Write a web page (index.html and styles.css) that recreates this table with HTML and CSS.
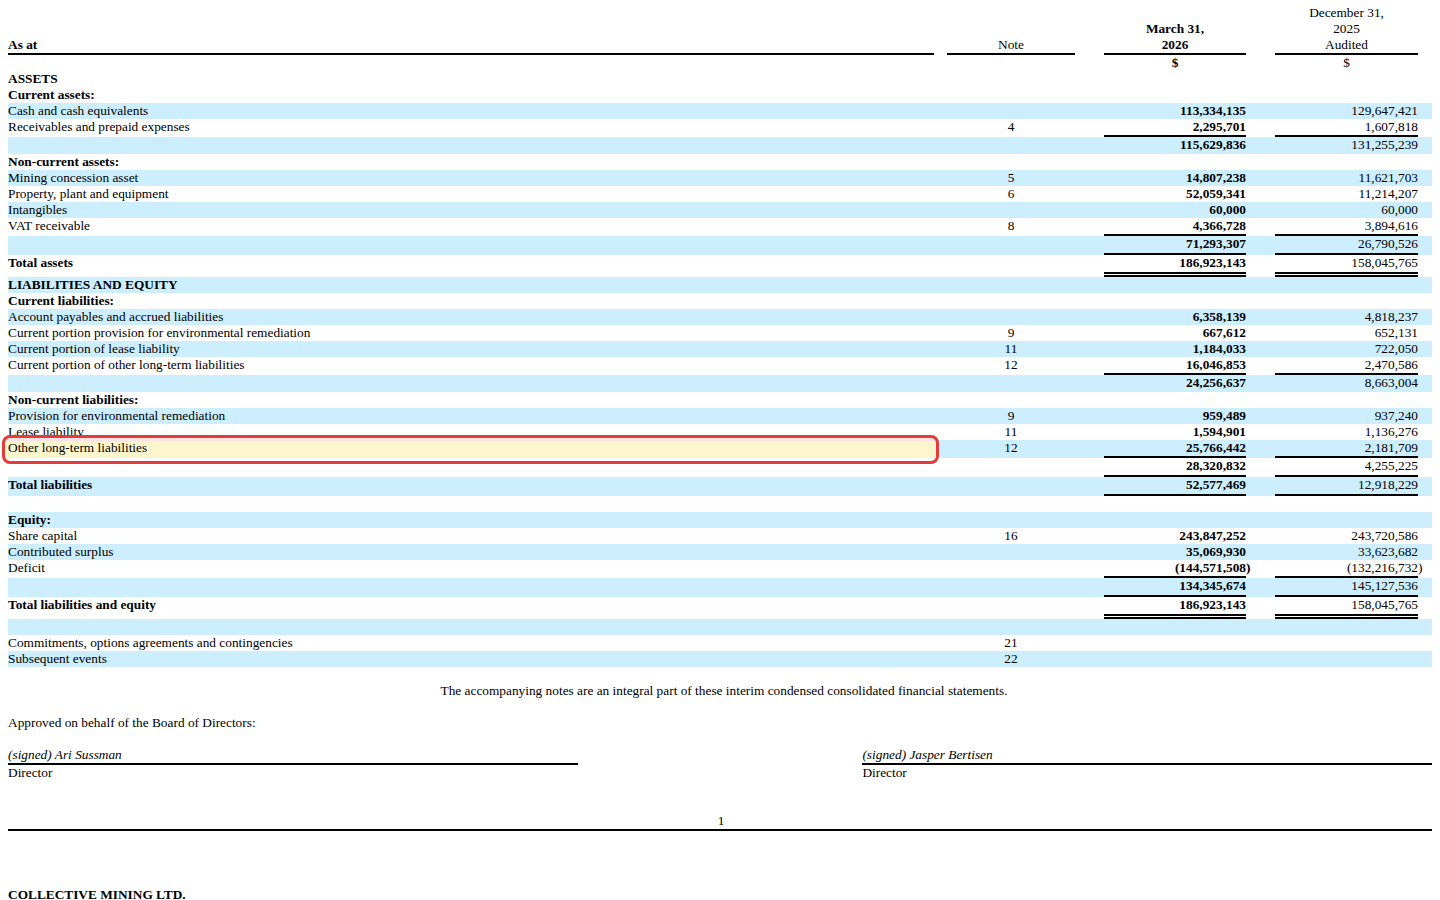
FILE: index.html
```html
<!DOCTYPE html>
<html lang="en">
<head>
<meta charset="utf-8">
<title>Collective Mining Ltd. - Statement of Financial Position</title>
<link rel="stylesheet" href="styles.css">
</head>
<body>
<div class="page">
<table class="bs">
<colgroup>
<col class="c-label"><col class="c-sp1"><col class="c-note"><col class="c-sp"><col class="c-cur"><col class="c-sp"><col class="c-pri"><col class="c-end">
</colgroup>
<tbody>
<tr class="hdr">
<td class="ln bd">As at</td><td></td><td class="ln note">Note</td><td></td><td class="ln ctr bd">March 31,<br>2026</td><td></td><td class="ln ctr">December 31,<br>2025<br>Audited</td><td></td>
</tr>
<tr><td></td><td></td><td></td><td></td><td class="ctr bd">$</td><td></td><td class="ctr">$</td><td></td></tr>
<tr><td class="bd">ASSETS</td><td></td><td></td><td></td><td></td><td></td><td></td><td></td></tr>
<tr><td class="bd">Current assets:</td><td></td><td></td><td></td><td></td><td></td><td></td><td></td></tr>
<tr class="b"><td>Cash and cash equivalents</td><td></td><td class="note"></td><td></td><td class="num bd">113,334,135</td><td></td><td class="num">129,647,421</td><td></td></tr>
<tr><td>Receivables and prepaid expenses</td><td></td><td class="note">4</td><td></td><td class="num bd ul">2,295,701</td><td></td><td class="num ul">1,607,818</td><td></td></tr>
<tr class="b sub"><td></td><td></td><td class="note"></td><td></td><td class="num bd">115,629,836</td><td></td><td class="num">131,255,239</td><td></td></tr>
<tr><td class="bd">Non-current assets:</td><td></td><td></td><td></td><td></td><td></td><td></td><td></td></tr>
<tr class="b"><td>Mining concession asset</td><td></td><td class="note">5</td><td></td><td class="num bd">14,807,238</td><td></td><td class="num">11,621,703</td><td></td></tr>
<tr><td>Property, plant and equipment</td><td></td><td class="note">6</td><td></td><td class="num bd">52,059,341</td><td></td><td class="num">11,214,207</td><td></td></tr>
<tr class="b"><td>Intangibles</td><td></td><td class="note"></td><td></td><td class="num bd">60,000</td><td></td><td class="num">60,000</td><td></td></tr>
<tr><td>VAT receivable</td><td></td><td class="note">8</td><td></td><td class="num bd ul">4,366,728</td><td></td><td class="num ul">3,894,616</td><td></td></tr>
<tr class="b sub"><td></td><td></td><td class="note"></td><td></td><td class="num bd ul">71,293,307</td><td></td><td class="num ul">26,790,526</td><td></td></tr>
<tr><td class="bd">Total assets</td><td></td><td class="note"></td><td></td><td class="num bd dbl">186,923,143</td><td></td><td class="num dbl">158,045,765</td><td></td></tr>
<tr class="b"><td class="bd">LIABILITIES AND EQUITY</td><td></td><td></td><td></td><td></td><td></td><td></td><td></td></tr>
<tr><td class="bd">Current liabilities:</td><td></td><td></td><td></td><td></td><td></td><td></td><td></td></tr>
<tr class="b"><td>Account payables and accrued liabilities</td><td></td><td class="note"></td><td></td><td class="num bd">6,358,139</td><td></td><td class="num">4,818,237</td><td></td></tr>
<tr><td>Current portion provision for environmental remediation</td><td></td><td class="note">9</td><td></td><td class="num bd">667,612</td><td></td><td class="num">652,131</td><td></td></tr>
<tr class="b"><td>Current portion of lease liability</td><td></td><td class="note">11</td><td></td><td class="num bd">1,184,033</td><td></td><td class="num">722,050</td><td></td></tr>
<tr><td>Current portion of other long-term liabilities</td><td></td><td class="note">12</td><td></td><td class="num bd ul">16,046,853</td><td></td><td class="num ul">2,470,586</td><td></td></tr>
<tr class="b sub"><td></td><td></td><td class="note"></td><td></td><td class="num bd">24,256,637</td><td></td><td class="num">8,663,004</td><td></td></tr>
<tr><td class="bd">Non-current liabilities:</td><td></td><td></td><td></td><td></td><td></td><td></td><td></td></tr>
<tr class="b"><td>Provision for environmental remediation</td><td></td><td class="note">9</td><td></td><td class="num bd">959,489</td><td></td><td class="num">937,240</td><td></td></tr>
<tr><td>Lease liability</td><td></td><td class="note">11</td><td></td><td class="num bd">1,594,901</td><td></td><td class="num">1,136,276</td><td></td></tr>
<tr class="b"><td class="hl"><span class="hl-box"></span><span class="hl-text">Other long-term liabilities</span></td><td></td><td class="note">12</td><td></td><td class="num bd ul">25,766,442</td><td></td><td class="num ul">2,181,709</td><td></td></tr>
<tr class="sub"><td></td><td></td><td class="note"></td><td></td><td class="num bd ul">28,320,832</td><td></td><td class="num ul">4,255,225</td><td></td></tr>
<tr class="b sub"><td class="bd">Total liabilities</td><td></td><td class="note"></td><td></td><td class="num bd ul">52,577,469</td><td></td><td class="num ul">12,918,229</td><td></td></tr>
<tr class="blank"><td></td><td></td><td></td><td></td><td></td><td></td><td></td><td></td></tr>
<tr class="b"><td class="bd">Equity:</td><td></td><td></td><td></td><td></td><td></td><td></td><td></td></tr>
<tr><td>Share capital</td><td></td><td class="note">16</td><td></td><td class="num bd">243,847,252</td><td></td><td class="num">243,720,586</td><td></td></tr>
<tr class="b"><td>Contributed surplus</td><td></td><td class="note"></td><td></td><td class="num bd">35,069,930</td><td></td><td class="num">33,623,682</td><td></td></tr>
<tr><td>Deficit</td><td></td><td class="note"></td><td></td><td class="num bd ul">(144,571,508<span class="paren">)</span></td><td></td><td class="num ul">(132,216,732<span class="paren">)</span></td><td></td></tr>
<tr class="b sub"><td></td><td></td><td class="note"></td><td></td><td class="num bd ul">134,345,674</td><td></td><td class="num ul">145,127,536</td><td></td></tr>
<tr><td class="bd">Total liabilities and equity</td><td></td><td class="note"></td><td></td><td class="num bd dbl">186,923,143</td><td></td><td class="num dbl">158,045,765</td><td></td></tr>
<tr class="b blank"><td></td><td></td><td></td><td></td><td></td><td></td><td></td><td></td></tr>
<tr><td>Commitments, options agreements and contingencies</td><td></td><td class="note">21</td><td></td><td></td><td></td><td></td><td></td></tr>
<tr class="b"><td>Subsequent events</td><td></td><td class="note">22</td><td></td><td></td><td></td><td></td><td></td></tr>
</tbody>
</table>

<p class="footnote">The accompanying notes are an integral part of these interim condensed consolidated financial statements.</p>
<p class="approved">Approved on behalf of the Board of Directors:</p>

<div class="sigs">
  <div class="sig">
    <div class="sig-name">(signed) Ari Sussman</div>
    <div>Director</div>
  </div>
  <div></div>
  <div class="sig">
    <div class="sig-name">(signed) Jasper Bertisen</div>
    <div>Director</div>
  </div>
</div>

<div class="pageno">1</div>
<div class="company">COLLECTIVE MINING LTD.</div>
</div>
</body>
</html>
```

FILE: styles.css
```css
html, body {
  margin: 0;
  padding: 0;
  background: #fff;
}

body {
  font-family: "Liberation Serif", "Times New Roman", serif;
  font-size: 10pt;
  line-height: 16px;
  color: #000;
}

.page {
  padding: 5px 8px 0;
}

.bs {
  width: 1424px;
  table-layout: fixed;
  border-collapse: separate;
  border-spacing: 0;
}

.c-label { width: 926px; }
.c-sp1 { width: 13px; }
.c-note { width: 128px; }
.c-sp { width: 29px; }
.c-cur { width: 142px; }
.c-pri { width: 143px; }
.c-end { width: 14px; }

.bs td {
  padding: 0;
  vertical-align: top;
  white-space: nowrap;
}

.bs tr.blank td {
  height: 16px;
}

.bs tr.b {
  background: #cceeff;
}

.bs tr.sub td {
  padding-bottom: 1px;
}

.hdr td {
  vertical-align: bottom;
}

.hdr .ln {
  border-bottom: 2px solid #000;
}

.bd { font-weight: bold; }

.ctr { text-align: center; }

.note { text-align: center; }

.num { text-align: right; }

.bs td.ul {
  border-bottom: 2px solid #000;
}

.bs td.dbl {
  padding-bottom: 1px;
  border-bottom: 5px double #000;
}

.paren {
  margin-right: -0.333em;
}

.hl {
  position: relative;
}

.hl-box {
  position: absolute;
  left: -6px;
  right: -5px;
  top: -5px;
  bottom: -6px;
  border: 3px solid #e53b3b;
  border-radius: 8px;
  background: linear-gradient(to bottom, #fde3e3 0, #fde3e3 3px, #fdf6cc 3px, #fdf6cc 20px, #ffffff 20px);
  z-index: 1;
}

.hl-text {
  position: relative;
  z-index: 2;
}

.footnote {
  margin: 16px 0 0;
  padding-left: 8px;
  text-align: center;
}

.approved {
  margin: 16px 0 0;
}

.sigs {
  margin-top: 16px;
  display: grid;
  grid-template-columns: 2fr 1fr 2fr;
}

.sig-name {
  font-style: italic;
  border-bottom: 2px solid #000;
}

.pageno {
  margin-top: 32px;
  padding-left: 2px;
  text-align: center;
  border-bottom: 2px solid #000;
}

.company {
  margin-top: 56px;
  font-weight: bold;
}
```
